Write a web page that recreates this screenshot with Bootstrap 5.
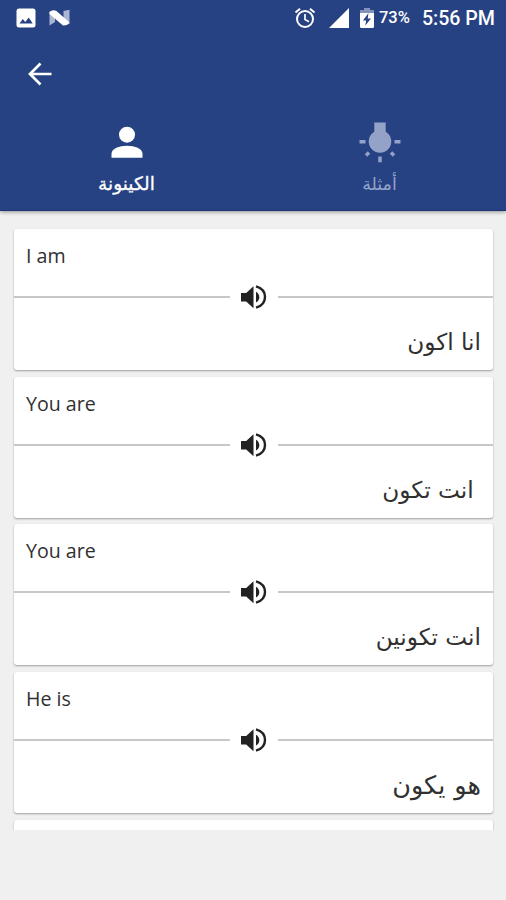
<!DOCTYPE html>
<html lang="ar">
<head>
<meta charset="utf-8">
<meta name="viewport" content="width=device-width, initial-scale=1">
<title>الكينونة</title>
<link href="https://cdn.jsdelivr.net/npm/bootstrap@5.3.0/dist/css/bootstrap.min.css" rel="stylesheet">
<style>
  body { background: #f0f0f0; font-family: "Open Sans", "DejaVu Sans", sans-serif; height: 900px; overflow: hidden; }
  svg { display: block; flex: none; }
  .app-header { height: 211px; background: #264283; box-shadow: 0 1px 4px rgba(0,0,0,.4); border-bottom: 1px solid #1b3577; }
  .status-bar { height: 36px; padding: 0 11px 0 16px; font-family: Roboto, sans-serif; font-weight: 500; }
  .notify-icon, .signal-icon { margin-left: 13px; }
  .battery-icon { margin-left: 11px; }
  .battery-label { width: 32px; font-size: 16.500px; margin-left: 5px; line-height: 36px; white-space: nowrap; }
  .clock-label { font-size: 19.600px; margin-left: 11px; line-height: 37px; white-space: nowrap; }
  .toolbar { height: 75px; padding-left: 26px; }
  .tab-link { height: 99px; padding-top: 10px; }
  .tab-link.inactive { color: #95a2c8; }
  .tab-text { font-family: "DejaVu Sans", sans-serif; font-size: 17.500px; line-height: 24px; margin-top: 9px; white-space: nowrap; }
  .tab-link:not(.inactive) .tab-text { font-size: 18.500px; -webkit-text-stroke: .3px #fff; }
  .phrase-list { height: 619px; padding: 18px 13px 0 14px; gap: 6.7px; overflow: hidden; }
  .phrase { height: 141px; flex: none; border: 0; border-radius: 3px; box-shadow: 0 1px 2px rgba(0,0,0,.35); }
  .english { height: 53px; padding-left: 12px; font-size: 19.6px; line-height: 53px; color: #303030; }
  .divider { height: 30px; gap: 9px; }
  .rule { height: 2px; background: #c8c8c8; }
  .arabic { height: 58px; padding-right: 12px; line-height: 60px; font-family: "DejaVu Sans", sans-serif; font-size: 23.2px; color: #303030; white-space: pre; }
  .arabic.wide { font-size: 25.500px; word-spacing: 1px; }
</style>
<script src="https://cdn.jsdelivr.net/npm/bootstrap@5.3.0/dist/js/bootstrap.bundle.min.js"></script>
</head>
<body>
<svg width="0" height="0" class="position-absolute" aria-hidden="true">
  <symbol id="speaker" viewBox="0 0 30 30">
    <path fill="#222" d="M2 11h5.200L14.500 4.200v22L7.200 19.500H2z"/>
    <path fill="#222" d="M17 9.700q3.300 2 3.300 5.500T17 20.500z"/>
    <path fill="none" stroke="#222" stroke-width="2.400" d="M17 4.300C23 6 26 10 26 15s-3 9-9 10.700"/>
  </symbol>
</svg>
<header class="app-header text-white position-relative">
  <div class="status-bar d-flex align-items-center">
    <svg width="20" height="20" viewBox="0 0 20 20"><rect x=".5" y=".5" width="19" height="19" rx="2.500" fill="#fff"/><path fill="#264283" d="M3.500 15.500 6.800 11l2.500 3 3.400-4.500 4 6z"/></svg>
    <svg class="notify-icon" width="22" height="18" viewBox="0 0 22 18"><path fill="#a9b5d3" d="M.5 2.500 6 4v9L.5 16.500zM14.500 2 20.500.700V15l-6 1z"/><path fill="#fff" d="M.5 3Q3.500 0 7.500 2L20.500 13.500q-2.500 3.500-6.500 3L.5 5z"/></svg>
    <svg class="ms-auto" width="22" height="22" viewBox="0 0 22 22" fill="none" stroke="#fff"><circle cx="11" cy="12" r="8" stroke-width="2"/><path stroke-width="2" d="M1.500 5.500 6 1.800M16 1.800l4.500 3.700"/><path stroke-width="1.700" d="M11 7v5.500l4 2.300"/></svg>
    <svg class="signal-icon" width="20" height="20" viewBox="0 0 20 20"><path fill="#fff" d="M20 0v20H0z"/></svg>
    <svg class="battery-icon" width="14" height="20" viewBox="0 0 14 20"><path fill="#8493b9" d="M4 0h6v2h4v4H0V2h4z"/><path fill="#fff" d="M0 5h14v13.500q0 1.500-1.500 1.500h-11Q0 20 0 18.500z"/><path fill="#264283" d="M8.500 5 3 12.500h3.200L5.300 17.500 11 10.500H7.700z"/></svg>
    <span class="battery-label">73%</span>
    <span class="clock-label">5:56 PM</span>
  </div>
  <nav class="toolbar d-flex align-items-center">
    <svg width="28" height="28" viewBox="0 0 28 28" fill="none" stroke="#fff" stroke-width="2.700"><path d="M25.500 14H5M14.500 3.500 4 14l10.500 10.500"/></svg>
  </nav>
  <div class="row g-0 text-center">
    <div class="col tab-link d-flex flex-column align-items-center">
      <svg width="42" height="42" viewBox="0 0 42 42"><circle cx="21" cy="13.700" r="8" fill="#fff"/><path fill="#fff" d="M5.500 36.700v-4C5.500 22 36.500 22 36.500 32.700v4z"/></svg>
      <div class="tab-text">الكينونة</div>
    </div>
    <div class="col tab-link inactive d-flex flex-column align-items-center">
      <svg width="42" height="42" viewBox="0 0 42 42" fill="#95a2c8"><path d="M15.300 1.500h11.400v9.300a11.300 11.300 0 1 1-11.400 0z"/><path stroke="#95a2c8" stroke-width="3.500" d="M.5 20.700h6M35.500 20.700h6M21 35.500v5.800M10 31.500l-3 3M32 31.500l3 3"/></svg>
      <div class="tab-text">أمثلة</div>
    </div>
  </div>
</header>
<main class="phrase-list d-flex flex-column">
  <article class="card phrase"><div class="english">I am</div><div class="divider d-flex align-items-center"><span class="rule flex-fill"></span><svg width="30" height="30"><use href="#speaker"/></svg><span class="rule flex-fill"></span></div><div class="arabic" dir="rtl">انا اكون</div></article>
  <article class="card phrase"><div class="english">You are</div><div class="divider d-flex align-items-center"><span class="rule flex-fill"></span><svg width="30" height="30"><use href="#speaker"/></svg><span class="rule flex-fill"></span></div><div class="arabic" dir="rtl"> انت تكون</div></article>
  <article class="card phrase"><div class="english">You are</div><div class="divider d-flex align-items-center"><span class="rule flex-fill"></span><svg width="30" height="30"><use href="#speaker"/></svg><span class="rule flex-fill"></span></div><div class="arabic" dir="rtl">انت تكونين</div></article>
  <article class="card phrase"><div class="english">He is</div><div class="divider d-flex align-items-center"><span class="rule flex-fill"></span><svg width="30" height="30"><use href="#speaker"/></svg><span class="rule flex-fill"></span></div><div class="arabic wide" dir="rtl">هو يكون</div></article>
  <article class="card phrase"></article>
</main>
</body>
</html>
